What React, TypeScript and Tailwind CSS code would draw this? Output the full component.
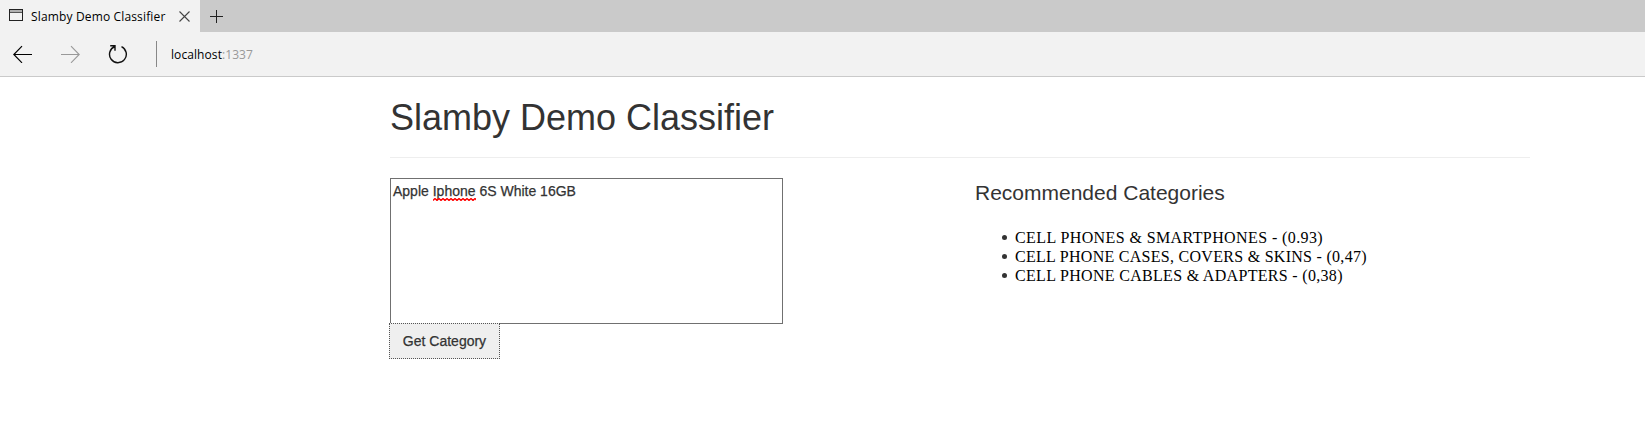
const categories = [
  { text: 'CELL PHONES & SMARTPHONES - (0.93)', spacing: 'tracking-[0.4px]' },
  { text: 'CELL PHONE CASES, COVERS & SKINS - (0,47)', spacing: 'tracking-[0.28px]' },
  { text: 'CELL PHONE CABLES & ADAPTERS - (0,38)', spacing: 'tracking-[0.31px]' },
];

function BrowserChrome() {
  return (
    <header className="font-['Open_Sans','Noto_Sans',sans-serif] text-[12px] text-black">
      <div className="flex h-8 bg-[#cacaca]">
        <div className="flex w-[200px] items-center bg-[#f2f2f2] pl-[9px]">
          <svg className="-mt-px" width="14" height="13" viewBox="0 0 14 13" fill="none" stroke="#222" shapeRendering="crispEdges">
            <path d="M1 1.500h12M1 2.500h12" stroke="#b0b0b0" />
            <path d="M.5 .5h13v11H.5z" />
            <path d="M1 3.500h12" stroke="#555" />
          </svg>
          <span className="ml-2 w-[135px] whitespace-nowrap pt-px leading-4 tracking-[0.15px]">Slamby Demo Classifier</span>
          <svg className="ml-[13px]" width="11" height="11" viewBox="0 0 11 11" stroke="#444" strokeWidth="1.1">
            <path d="M.5.5l10 10M10.500.5l-10 10" />
          </svg>
        </div>
        <svg className="ml-[10px] mt-[10px]" width="13" height="13" viewBox="0 0 13 13" stroke="#222" shapeRendering="crispEdges">
          <path d="M0 6.500h13M6.500 0v13" />
        </svg>
      </div>
      <div className="flex h-[45px] items-center border-b border-[#cacaca] bg-[#f2f2f2] pl-[13px]">
        <svg width="19" height="18" viewBox="0 0 19 18" fill="none" stroke="#000" strokeWidth="1.2">
          <path d="M19 9.500H.8M9 1.200L.8 9.500 9 17.800" />
        </svg>
        <svg className="ml-[29px]" width="19" height="18" viewBox="0 0 19 18" fill="none" stroke="#999" strokeWidth="1.1">
          <path d="M0 9.500h18.200M10 1.200L18.200 9.500 10 17.800" />
        </svg>
        <svg className="ml-[28px]" width="20" height="20" viewBox="0 0 20 20" fill="none" stroke="#111" strokeWidth="1.400">
          <path d="M6.800 2.500A8.400 8.400 0 1 0 13.500 2.700M2.200 1.700H7v5" />
        </svg>
        <div className="ml-[28px] h-[26px] w-px bg-[#888]" />
        <span className="ml-[14px] pt-px leading-4 tracking-[0.08px]">localhost<span className="text-[#999]">:1337</span></span>
      </div>
    </header>
  );
}

export default function App() {
  return (
    <div className="h-[439px] overflow-hidden bg-white font-['Liberation_Sans',Arial,sans-serif] text-[#333]">
      <BrowserChrome />
      <main className="ml-[390px] w-[1140px]">
        <div className="h-[81px] border-b border-[#eee] pt-[21px]">
          <h1 className="whitespace-nowrap text-[36px] leading-[40px]">Slamby Demo Classifier</h1>
        </div>
        <div className="flex pt-5">
          <section className="w-[585px]">
            <div className="h-[146px] w-[393px] border border-[#707070] pl-[2px] pt-[2px] text-[14px] leading-5 [-webkit-text-stroke:0.25px_#333]">
              Apple{' '}
              <span className="relative">
                Iphone
                <svg className="absolute bottom-[-2px] left-0 w-full" height="3" fill="none" stroke="#f00" strokeWidth="1.400">
                  <path d="M0 2.500l2-2 2 2 2-2 2 2 2-2 2 2 2-2 2 2 2-2 2 2 2-2 2 2 2-2 2 2 2-2 2 2 2-2 2 2 2-2 2 2 2-2 2 2" />
                </svg>
              </span>{' '}
              6S White 16GB
            </div>
            <button className="-ml-px -mt-px block h-9 w-[111px] whitespace-nowrap border border-dotted border-[#555] bg-[#efefef] text-[14px] leading-5 [-webkit-text-stroke:0.25px_#333]">
              Get Category
            </button>
          </section>
          <section>
            <h2 className="whitespace-nowrap text-[21px] leading-[30px]">Recommended Categories</h2>
            <ul className="mt-[20px] font-['Liberation_Serif',serif] text-[16px] leading-[19px] text-black">
              {categories.map(({ text, spacing }) => (
                <li key={text} className="flex items-center">
                  <span className="ml-[27px] mr-[8px] size-[5px] rounded-full bg-[#333]" />
                  <span className={spacing}>{text}</span>
                </li>
              ))}
            </ul>
          </section>
        </div>
      </main>
    </div>
  );
}
